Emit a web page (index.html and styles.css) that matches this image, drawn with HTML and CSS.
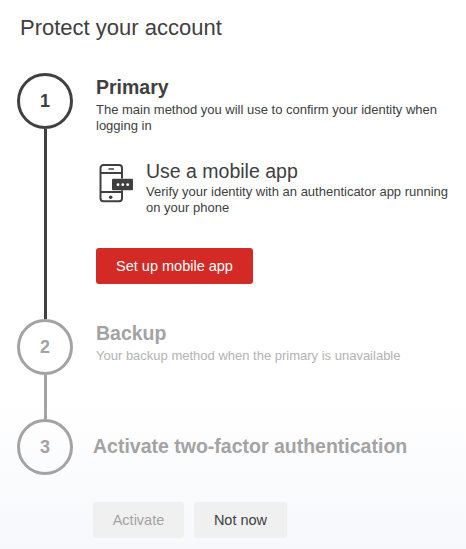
FILE: index.html
```html
<!DOCTYPE html>
<html lang="en">

<head>
    <meta charset="UTF-8">
    <meta name="viewport" content="width=device-width, initial-scale=1.0">
    <title>Protect your account</title>
    <link rel="stylesheet" href="styles.css">
</head>

<body>
    <h1 class="page-title">Protect your account</h1>

    <div class="steps">
        <!-- step 1 -->
        <div class="step step-primary">
            <div class="marker">
                <div class="circle">1</div>
                <div class="line"></div>
            </div>
            <div class="step-body">
                <h2>Primary</h2>
                <p>The main method you will use to confirm your identity when logging in</p>
                <div class="method">
                    <svg class="method-icon" width="36" height="40" viewBox="0 0 36 40" fill="none">
                        <path d="M24 15.500V5a3 3 0 0 0-3-3H5.500a3 3 0 0 0-3 3v30.300a3 3 0 0 0 3 3H21a3 3 0 0 0 3-3v-8" stroke="#404040" stroke-width="2" />
                        <path d="M2.500 10H24M2.500 29H24" stroke="#404040" stroke-width="1.800" />
                        <path d="M10.500 6h5.500" stroke="#404040" stroke-width="1.500" />
                        <circle cx="12.700" cy="34.200" r="1.800" fill="#404040" />
                        <rect x="14" y="15.700" width="21" height="11.600" rx="1" fill="#404040" />
                        <circle cx="20" cy="21.700" r="1.400" fill="#fff" />
                        <circle cx="24.800" cy="21.700" r="1.400" fill="#fff" />
                        <circle cx="29.700" cy="21.700" r="1.400" fill="#fff" />
                    </svg>
                    <div class="method-text">
                        <h3>Use a mobile app</h3>
                        <p>Verify your identity with an authenticator app running on your phone</p>
                    </div>
                </div>
                <button class="btn btn-red">Set up mobile app</button>
            </div>
        </div>

        <!-- step 2 -->
        <div class="step step-muted step-backup">
            <div class="marker">
                <div class="circle">2</div>
                <div class="line"></div>
            </div>
            <div class="step-body">
                <h2>Backup</h2>
                <p>Your backup method when the primary is unavailable</p>
            </div>
        </div>

        <!-- step 3 -->
        <div class="step step-muted step-last">
            <div class="marker">
                <div class="circle">3</div>
            </div>
            <h2>Activate two-factor authentication</h2>
        </div>
    </div>

    <div class="actions">
        <button class="btn btn-disabled">Activate</button>
        <button class="btn btn-grey">Not now</button>
    </div>
</body>

</html>
```

FILE: styles.css
```css
* {
    box-sizing: border-box;
}

html {
    height: 100%;
}

body {
    margin: 0;
    min-height: 100%;
    padding: 14px 0 0 0;
    font-family: "Liberation Sans", Arial, sans-serif;
    color: #404040;
    background: linear-gradient(to bottom, #fff 0, #fff 400px, #f7f8fc 549px);
}

.page-title {
    margin: 0 0 32px 20px;
    font-size: 22px;
    line-height: 27px;
    font-weight: normal;
}

.steps {
    padding-left: 17px;
}

.step {
    display: flex;
}

.step-primary {
    height: 246px;
}

.step-backup {
    height: 100px;
}

.marker {
    width: 56px;
    flex: none;
    display: flex;
    flex-direction: column;
    align-items: center;
}

.circle {
    width: 56px;
    height: 56px;
    flex: none;
    border: 3px solid #404040;
    border-radius: 50%;
    display: flex;
    align-items: center;
    justify-content: center;
    font-size: 18px;
    font-weight: bold;
}

.line {
    width: 3px;
    flex: 1;
    background: #404040;
}

.step-body {
    margin-left: 23px;
    padding-top: 2px;
    flex: 1;
}

.step h2 {
    margin: 0;
    font-size: 19.5px;
    line-height: 24px;
    font-weight: bold;
}

.step-body p {
    margin: 3px 0 0 0;
    font-size: 13px;
    line-height: 16px;
    padding-right: 14px;
}

.method {
    display: flex;
    margin-top: 25px;
}

.method-icon {
    flex: none;
    margin: 4px 12px 0 2px;
}

.method-text h3 {
    margin: 0 0 1px 0;
    font-size: 19.5px;
    line-height: 24px;
    font-weight: normal;
}

.method-text p {
    margin: 0;
    padding-right: 10px;
}

.btn {
    height: 36px;
    border: none;
    border-radius: 3px;
    font-family: inherit;
    font-size: 14.5px;
    padding: 0;
    cursor: pointer;
}

.btn-red {
    display: block;
    width: 157px;
    margin-top: 32px;
    background: #d32a26;
    color: #fff;
}

.step-muted .circle {
    border-color: #a3a3a3;
    color: #a3a3a3;
}

.step-muted .line {
    background: #a3a3a3;
}

.step-muted h2 {
    color: #a3a3a3;
}

.step-muted .step-body p {
    color: #b3b3b3;
}

.step-last {
    align-items: center;
}

.step-last h2 {
    margin-left: 20px;
    margin-bottom: 3px;
}

.actions {
    display: flex;
    gap: 10px;
    margin: 27px 0 0 93px;
}

.btn-disabled {
    width: 91px;
    background: #f0f0f0;
    color: #a3a3a3;
}

.btn-grey {
    width: 93px;
    background: #f0f0f0;
    color: #404040;
}
```
